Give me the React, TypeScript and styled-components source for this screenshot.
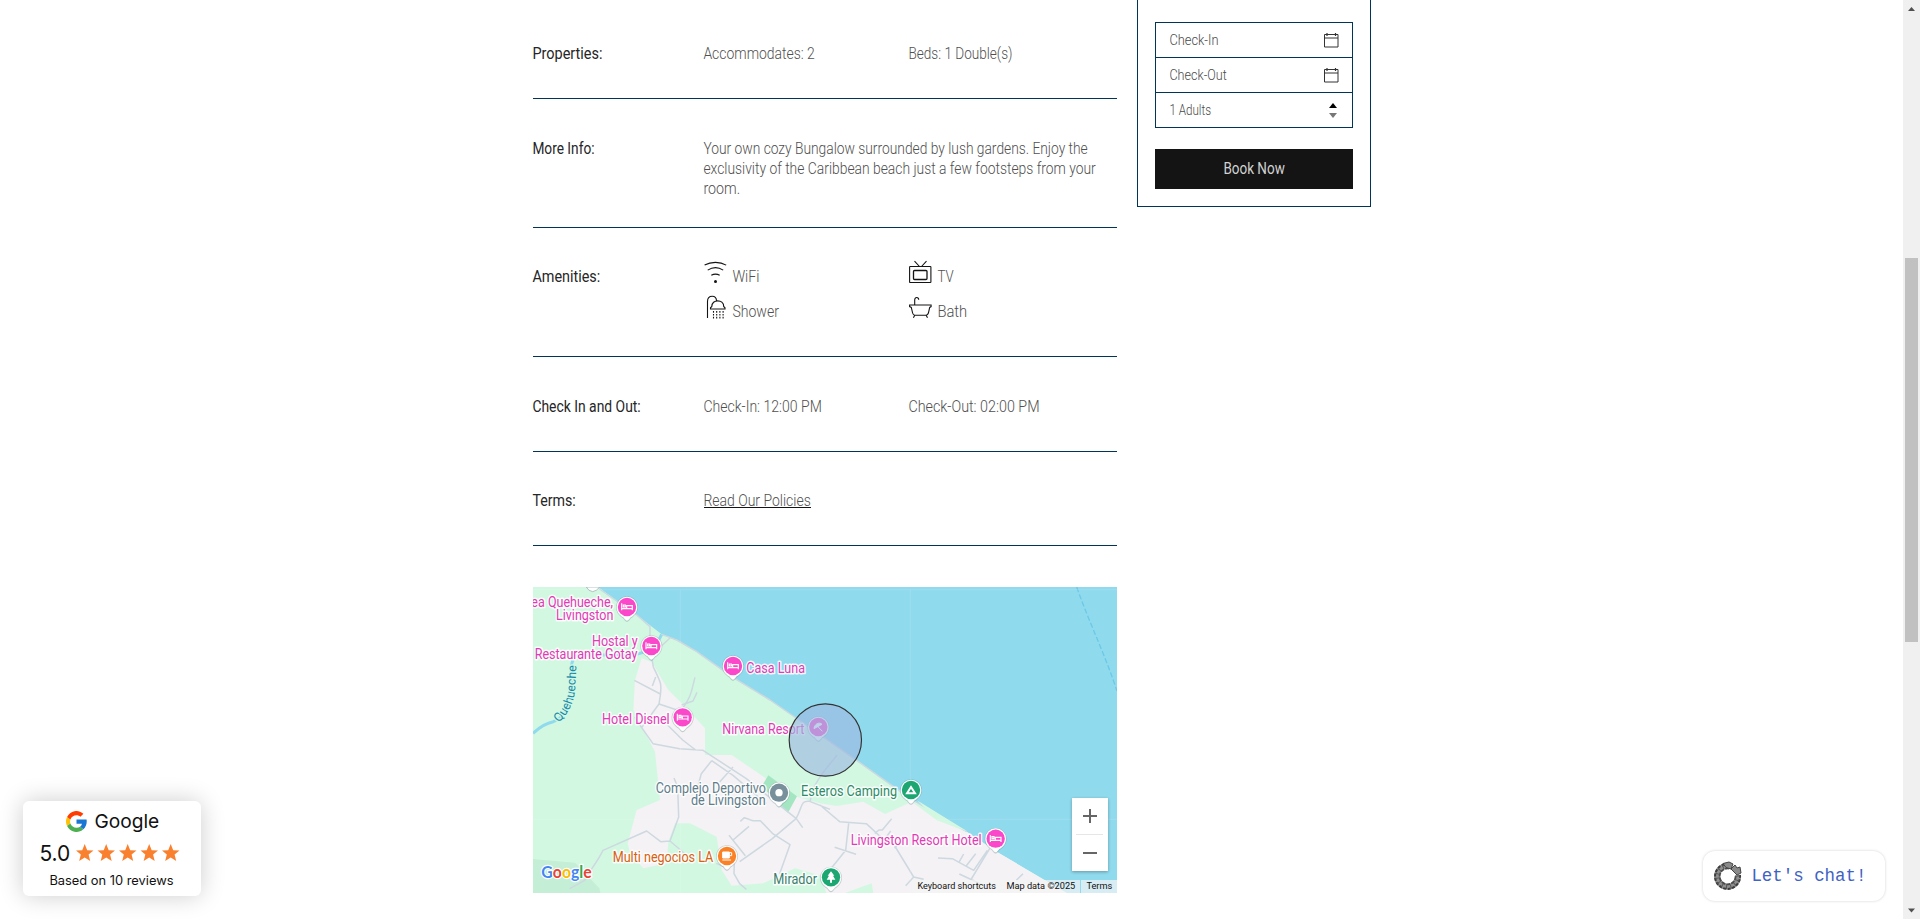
import React, { useLayoutEffect, useRef, useState } from 'react';
import styled, { createGlobalStyle } from 'styled-components';

const navy = '#003557';

const Global = createGlobalStyle`
  *, *::before, *::after { box-sizing: border-box; }
  html, body { margin: 0; height: 100%; overflow: hidden; background: #fff; }
  body { font-family: Roboto, "Liberation Sans", sans-serif; font-size: 16px; line-height: 20px; color: #111; }
`;

const FitBox = styled.span<{ $w: number }>`
  display: inline-block;
  width: ${p => p.$w}px;
  white-space: nowrap;
  text-align: left;
  vertical-align: top;
`;
const FitInner = styled.span`
  display: inline-block;
  transform-origin: 0 50%;
`;

/** Condenses a run of text so that it takes exactly `w` pixels. */
function Fit({ w, children }: { w: number; children: React.ReactNode }) {
  const ref = useRef<HTMLSpanElement>(null);
  const [k, setK] = useState(1);
  useLayoutEffect(() => {
    if (ref.current) setK((w + 0.5) / ref.current.offsetWidth);
  }, [w]);
  return (
    <FitBox $w={w}>
      <FitInner ref={ref} style={{ transform: `translateX(-0.6px) scaleX(${k})` }}>{children}</FitInner>
    </FitBox>
  );
}

const Page = styled.div`
  display: flex;
  height: 919px;
  width: 1920px;
  overflow: hidden;
`;
const Main = styled.main`
  flex: 1;
  display: flex;
  align-items: flex-start;
  padding-left: 533px;
  gap: 20px;
`;
const Details = styled.section`
  width: 584px;
  display: flex;
  flex-direction: column;
`;
const Row = styled.div<{ $h: number; $pad: number }>`
  display: grid;
  grid-template-columns: 171px 205px 1fr;
  align-content: start;
  height: ${p => p.$h}px;
  padding-top: ${p => p.$pad}px;
  border-bottom: 1px solid ${navy};
`;
const Label = styled.div`
  color: #262626;
  font-weight: 400;
`;
const Value = styled.div<{ $wide?: boolean }>`
  color: #505050;
  font-weight: 300;
  grid-column: ${p => (p.$wide ? '2 / -1' : 'auto')};
`;
const PolicyLink = styled.a`
  display: inline-block;
  height: 17px;
  border-bottom: 1px solid #141414;
`;
const Amenities = styled.div`
  grid-column: 2 / -1;
  display: grid;
  grid-template-columns: 205px 1fr;
  grid-auto-rows: 35px;
  margin-top: -7px;
  color: #505050;
  font-weight: 300;
`;
const Amenity = styled.div`
  display: flex;
  gap: 6px;
  svg { display: block; flex: none; }
`;
const AmenityName = styled.span`
  padding-top: 7px;
`;

const Icon = ({ children }: { children: React.ReactNode }) => (
  <svg width="23" height="24" viewBox="0 0 23 24" fill="none" stroke="#141414" strokeWidth="1.1">{children}</svg>
);
const WifiIcon = () => (
  <Icon>
    <path d="M.6 5.100C7 1.400 16 1.400 22.200 5.100M3.700 10.100C8.500 7.100 14.500 7.100 19.200 10.100M7.300 15.300C10 13.800 13 13.800 15.700 15.300" />
    <circle cx="11.500" cy="21.500" r="1.500" fill="#141414" stroke="none" />
  </Icon>
);
const TvIcon = () => (
  <Icon>
    <rect x=".6" y="6.500" width="21.300" height="16" rx=".6" />
    <rect x="4.500" y="10.500" width="13.500" height="9" rx="1" strokeWidth="1.300" />
    <path d="M5.500 1.100l5 5.400M17.500 1.100l-5 5.400" />
  </Icon>
);
const ShowerIcon = () => (
  <Icon>
    <path d="M3.500 23V6.500C3.500 2.800 5.800 1.300 8.300 1.300c2.700 0 4 1.600 4.300 4.600M6.500 14h14.500v-1.200l-1.300-1.300c0-3.800-2.900-5.600-6-5.600s-5.900 1.800-5.900 5.600l-1.300 1.300z" />
    <path d="M9.500 16v8M12.700 16v8M15.900 16v8M19.100 16v8" strokeDasharray="1.700 1.200" />
  </Icon>
);
const BathIcon = () => (
  <Icon>
    <path d="M5.700 10V5c0-3.500 4-3 4-.2M.6 10h21.500v1.600l-1.400.8-1.300 5.600c-.5 1.800-1.200 2.300-2.600 2.300H6.200c-1.500 0-2.200-.5-2.600-2.300L2.300 12.400l-1.700-.8zM5.600 20.400l-1.200 2.400M17.300 20.400l1.200 2.400" />
  </Icon>
);

/* ---------- booking form ---------- */
const BookCard = styled.aside`
  width: 234px;
  height: 207px;
  padding: 22px 17px 0;
  border: 1px solid ${navy};
  border-top: 0;
`;
const Fields = styled.div`
  border: 1px solid ${navy};
  height: 106px;
`;
const Field = styled.div`
  display: flex;
  align-items: center;
  justify-content: space-between;
  height: 35px;
  padding: 0 13px 0 14px;
  font-size: 14px;
  font-weight: 300;
  color: #4a4a4a;
  & + & { border-top: 1px solid ${navy}; }
  &:first-child { height: 34px; }
`;
const Stepper = styled.svg`
  margin-right: 2px;
`;
const BookButton = styled.button`
  display: flex;
  align-items: center;
  justify-content: center;
  width: 198px;
  height: 40px;
  margin-top: 21px;
  border: 0;
  background: #141414;
  color: #d2d2d2;
  font: 400 16px/20px Roboto, sans-serif;
`;
const CalendarIcon = () => (
  <svg width="15" height="15" viewBox="0 0 15 15" fill="none" stroke="#333" strokeWidth="1">
    <path d="M.5 1.500h13.500v12.500H.5zM.5 5h13.500" />
    <path d="M3 0v3M11.500 0v3M2 1.500h2M10.500 1.500h2" strokeWidth="1.200" />
  </svg>
);

/* ---------- map ---------- */
const MapBox = styled.div`
  position: relative;
  width: 584px;
  height: 306px;
  margin-top: 41px;
  overflow: hidden;
  background: #90daee;
  > svg { display: block; }
`;
const ZoomPad = styled.div`
  position: absolute;
  right: 9px;
  top: 211px;
  width: 36px;
  height: 73px;
  background: #fff;
  box-shadow: 0 1px 3px rgba(0, 0, 0, 0.3);
`;
const Attribution = styled.div`
  position: absolute;
  right: 0;
  bottom: 0;
  height: 13px;
  display: flex;
  font: 400 9px/13px Roboto, sans-serif;
  color: #111;
`;
const Credit = styled.span<{ $gap?: boolean }>`
  padding: 0 5px 0 6px;
  background: rgba(245, 245, 245, 0.7);
  margin-left: ${p => (p.$gap ? '1px' : '0')};
`;

type Kind = 'bed' | 'dot' | 'camp' | 'cup' | 'tree' | 'beach';
const pinColors: Record<Kind, string> = {
  bed: '#fb47c9', dot: '#78909c', camp: '#1ba672', cup: '#fb8127', tree: '#1ba672', beach: '#fb47c9',
};
function Pin({ x, y, kind }: { x: number; y: number; kind: Kind }) {
  return (
    <g transform={`translate(${x} ${y})`}>
      <path d="M0 44C-4 44-8 38-12 33C-25 25-33 14-33 0A33 33 0 0 1 33 0C33 14 25 25 12 33C8 38 4 44 0 44z" fill="#6d8790" opacity=".35" transform="translate(0 1)" />
      <path d="M0 41C-4 41-7 36-11 31C-24 24-31 13-31 0A31 31 0 0 1 31 0C31 13 24 24 11 31C7 36 4 41 0 41z" fill="#fff" />
      <circle r="27.500" fill={pinColors[kind]} />
      {kind === 'bed' && <path d="M-16-11v21M-16 5h32v5M16 10V-4H-1V4M-11-6h6v6h-6z" fill="none" stroke="#fff" strokeWidth="3.500" />}
      {kind === 'dot' && <circle r="11" fill="#fff" />}
      {kind === 'camp' && <path d="M0-9L-12 10H12z" fill="none" stroke="#fff" strokeWidth="6" />}
      {kind === 'cup' && (
        <g stroke="#fff" strokeWidth="3">
          <path d="M-13-12H7V6H-13zM-14 12H12" fill="#fff" />
          <path d="M7-10h7v9H7" fill="none" />
        </g>
      )}
      {kind === 'tree' && <path d="M0-18L10-5H6L13 7H3V16H-3V7H-13L-6-5H-10z" fill="#fff" />}
      {kind === 'beach' && <path d="M-13 5C-12-10 4-16 11-8zM-3-3L12 13" fill="#fff" stroke="#fff" strokeWidth="3" />}
    </g>
  );
}

type MapLabel = [text: string, x: number, y: number, w: number, color: string];
const pink = '#e339b6';
const green = '#2c8a66';
const labels: MapLabel[] = [
  ['ea Quehueche,', -5, 60, 245, pink],
  ['Livingston', 69, 98, 172, pink],
  ['Hostal y', 177, 178, 137, pink],
  ['Restaurante Gotay', 5, 216, 308, pink],
  ['Casa Luna', 640, 257, 176, pink],
  ['Hotel Disnel', 207, 410, 203, pink],
  ['Nirvana Resort', 568, 440, 246, pink],
  ['Complejo Deportivo', 368, 618, 331, '#607d8b'],
  ['de Livingston', 474, 655, 224, '#607d8b'],
  ['Esteros Camping', 804, 628, 288, green],
  ['Livingston Resort Hotel', 953, 774, 393, pink],
  ['Multi negocios LA', 239, 825, 302, '#d8600f'],
  ['Mirador', 721, 890, 131, '#3b7d6d'],
];
const pins: [number, number, Kind][] = [
  [282, 60, 'bed'], [355, 177, 'bed'], [600, 237, 'bed'], [449, 391, 'bed'], [856, 420, 'beach'],
  [738, 617, 'dot'], [1134, 609, 'camp'], [1388, 755, 'bed'], [582, 807, 'cup'], [894, 871, 'tree'],
];

function MapDrawing() {
  return (
    <svg width="584" height="306" viewBox="0 0 1752 918">
      <rect width="1752" height="918" fill="#90daee" />
      <path d="M0 0H195L311 84L386 142L431 159L491 194L596 269L711 339L776 384L976 524L1131 634L1301 734L1391 794L1551 889L1601 918H0z" fill="#d3f8e2" />
      <path d="M0 816L126 827L199 904L202 918H0z" fill="#c5eed7" />
      <path d="M326 214L356 225L406 309L461 364L516 424V504H596L706 579L791 629L861 649L911 657L991 644L1056 681L1136 644L1211 699L1301 734L1391 794L1551 889L1601 918H1021L1016 889L936 918H880L860 865L786 844L691 889L596 896L566 849L551 749L471 709H426L406 764L401 829L331 844L291 799L284 769L311 669L381 639L366 494L301 369L306 279z" fill="#f4f2f4" />
      <path d="M686 598L706 565L792 628L765 677z" fill="#a5e6c2" />
      <path d="M0 439C20 420 40 408 61 404C105 390 112 330 116 279C112 240 115 205 140 204H300C340 197 370 180 386 142" fill="none" stroke="#90daee" strokeWidth="9" />
      <g fill="none" stroke="#cdd8e0" strokeWidth="4.500" strokeLinejoin="round">
        <path d="M195 3L311 84L351 119V175M386 142L431 159L491 194L596 269L711 339L776 384L976 524L1131 634L1301 734M411 153L355 205L361 240C385 290 386 290 382 325L378 351L430 368L449 391M304 280L382 321M368 270L358 297M378 351L326 422L360 470L440 485L510 490L640 575L790 695L809 722M326 422L305 390M445 370C480 320 475 310 486 271M446 354L480 342L492 316M400 410L430 440L449 459L488 489M536 521L505 560L494 600M536 521L600 565L700 650M600 540L560 585M423 573L434 600L437 690L411 762L383 764L341 732L210 790C190 830 170 850 155 880L110 905M411 762L460 804M550 829L582 843M604 824L603 860L620 890L640 907M620 824L718 755L789 695C810 660 800 640 830 643L891 667M622 703L634 692L660 701H682L718 739L771 773L740 860M588 745L637 806M600 759L648 718M831 645C835 610 850 580 891 530L912 505M861 654L920 704L1000 710L1040 747L1078 765L1142 870L1172 877M1142 870L1118 896M1076 695L1048 729H1038L1025 739M1085 784L1100 765M1073 732L1060 750M947 709L938 790L890 850M905 781L969 802M1370 785L1315 876M1363 790L1322 850L1258 815L1215 813M1279 824L1292 801M1300 836L1328 800M1279 861L1350 894M1450 880L1470 860" />
      </g>
      <path d="M1152 640L1211 699L1301 732z" fill="#d3f8e2" />
      <path d="M1631 0C1670 110 1715 200 1752 312" fill="none" stroke="#6bc9e6" strokeWidth="4" strokeDasharray="16 7" />
      <path d="M0 8H1752M0 697H1752M442 8V918M1132 8V918" stroke="#fff" strokeWidth="3" opacity=".12" />
      <path id="river" d="M78 407L98 384Q122 350 126 310L131 220" fill="none" />
      <g fontFamily="Roboto, sans-serif" fontSize="41.500" paintOrder="stroke" strokeLinejoin="round" stroke="#fff" strokeOpacity=".85" strokeWidth="9">
        <text fill="#168aa8" stroke="#d3f8e2" fontSize="37"><textPath href="#river">Quehueche</textPath></text>
        {labels.map(([text, x, y, w, color]) => (
          <text key={text} x={x} y={y} textLength={w} lengthAdjust="spacingAndGlyphs" fill={color}>{text}</text>
        ))}
      </g>
      <path d="M160 0H200Q190 13 179 14Q166 12 160 0z" fill="#fff" stroke="#8da4ab" strokeWidth="2" />
      {pins.map(([x, y, kind]) => <Pin key={`${x}`} x={x} y={y} kind={kind} />)}
      <circle cx="877" cy="459" r="108.500" fill="rgb(157,186,225)" fillOpacity=".65" stroke="#333" strokeWidth="3.500" />
      <text x="25" y="873" textLength="151" lengthAdjust="spacingAndGlyphs" fontFamily="Lato, sans-serif" fontWeight="700" fontSize="52" paintOrder="stroke" stroke="#fff" strokeWidth="7">
        <tspan fill="#4285f4">G</tspan><tspan fill="#ea4335">o</tspan><tspan fill="#fbbc04">o</tspan><tspan fill="#4285f4">g</tspan><tspan fill="#34a853">l</tspan><tspan fill="#ea4335">e</tspan>
      </text>
    </svg>
  );
}

/* ---------- floating widgets ---------- */
const Reviews = styled.div`
  position: absolute;
  left: 23px;
  top: 801px;
  width: 178px;
  height: 95px;
  border-radius: 6px;
  background: #fff;
  box-shadow: 0 0 24px rgba(0, 0, 0, 0.2);
  font-family: Inter, sans-serif;
  font-weight: 400;
  color: #111;
`;
const Brand = styled.div`
  display: flex;
  align-items: center;
  gap: 8px;
  padding: 9px 0 0 43px;
  height: 31px;
  font-size: 19px;
  line-height: 23px;
`;
const Score = styled.div`
  display: flex;
  align-items: center;
  gap: 6px;
  height: 42px;
  padding: 0 0 0 17px;
  font-size: 22px;
  line-height: 26px;
`;
const Based = styled.div`
  padding-left: 27px;
  margin-top: -3px;
  font-size: 12.500px;
  line-height: 20px;
`;
const Chat = styled.div`
  position: absolute;
  left: 1703px;
  top: 851px;
  width: 182px;
  height: 50px;
  display: flex;
  align-items: center;
  gap: 10px;
  padding-left: 10px;
  border-radius: 12px;
  background: #fff;
  box-shadow: 0 0 3px rgba(0, 0, 0, 0.18);
  font-family: "Liberation Mono", monospace;
  font-size: 17.500px;
  color: #3f62c4;
`;

const GoogleG = () => (
  <svg width="21" height="21" viewBox="0 0 48 48">
    <path fill="#ffc107" d="M10 28.500A14.500 14.500 0 0 1 10 19.500L2.500 13.500a23.500 23.500 0 0 0 0 21z" />
    <path fill="#ff3d00" d="M2.500 13.500L10 19.500C12 13.500 17.500 9.800 24 9.800c3.500 0 6.500 1.200 9 3.300l6.800-6.800A23.500 23.500 0 0 0 2.500 13.500z" />
    <path fill="#4caf50" d="M2.500 34.500L10 28.500C12 34.500 17.500 38.200 24 38.200c3.300 0 6-.8 8.200-2.400l7.500 6A23.500 23.500 0 0 1 2.500 34.500z" />
    <path fill="#1976d2" d="M24 19.500h23c1.500 9.500-1.500 17-7.300 22.300l-7.500-6c2.300-1.600 3.700-3.900 4.300-6.800H24z" />
  </svg>
);
const Stars = () => (
  <svg width="104" height="18" viewBox="0 0 104 18" fill="#f9802f">
    {[0, 1, 2, 3, 4].map(i => (
      <path key={i} transform={`translate(${i * 21.5} 0)`} d="M8.700 0L11.200 6.200L17.500 6.600L12.600 10.600L14.200 17L8.700 13.500L3.200 17L4.800 10.600L0 6.600L6.200 6.200z" />
    ))}
  </svg>
);
const Wreath = () => (
  <svg width="29" height="30" viewBox="0 0 29 30" fill="none">
    <path d="M17 5A10.500 10.500 0 1 0 25 14" stroke="#8f8f8f" strokeWidth="6" />
    <path d="M16 3A12.500 12.500 0 1 0 27 14" stroke="#3c3c3c" strokeWidth="2" strokeDasharray="3 1.500" />
    <path d="M16 7.500A8 8 0 1 0 22.500 14" stroke="#4c4c4c" strokeWidth="1.800" strokeDasharray="4 1" />
    <path d="M15 5A10.500 10.500 0 1 0 25 14" stroke="#555" strokeWidth="4" strokeDasharray="1 3.500" />
    <path d="M10 2.500l6-1.500 4 2-2 5-5-1.500zM18 8l4-4 2 3 3-1 1 6-4 2z" fill="#8a8a8a" stroke="#444" />
  </svg>
);

/* ---------- page scrollbar ---------- */
const Scrollbar = styled.div`
  width: 17px;
  height: 919px;
  display: flex;
  flex-direction: column;
  align-items: center;
  background: #f0f0f0;
`;
const Arrow = styled.svg`
  flex: none;
  width: 17px;
  height: 17px;
`;
const Thumb = styled.div`
  width: 13px;
  height: 384px;
  margin: 241px 0 auto;
  background: #c1c1c1;
`;

export default function App() {
  return (
    <>
      <Global />
      <Page>
        <Main>
          <Details>
            <Row $h={99} $pad={44}>
              <Label><Fit w={70}>Properties:</Fit></Label>
              <Value><Fit w={111}>Accommodates: 2</Fit></Value>
              <Value><Fit w={104}>Beds: 1 Double(s)</Fit></Value>
            </Row>
            <Row $h={129} $pad={40}>
              <Label><Fit w={62}>More Info:</Fit></Label>
              <Value $wide>
                <Fit w={384}>Your own cozy Bungalow surrounded by lush gardens. Enjoy the</Fit>
                <Fit w={392}>exclusivity of the Caribbean beach just a few footsteps from your</Fit>
                <Fit w={36}>room.</Fit>
              </Value>
            </Row>
            <Row $h={129} $pad={39}>
              <Label><Fit w={67}>Amenities:</Fit></Label>
              <Amenities>
                <Amenity><WifiIcon /><AmenityName><Fit w={27}>WiFi</Fit></AmenityName></Amenity>
                <Amenity><TvIcon /><AmenityName><Fit w={16}>TV</Fit></AmenityName></Amenity>
                <Amenity><ShowerIcon /><AmenityName><Fit w={46}>Shower</Fit></AmenityName></Amenity>
                <Amenity><BathIcon /><AmenityName><Fit w={29}>Bath</Fit></AmenityName></Amenity>
              </Amenities>
            </Row>
            <Row $h={95} $pad={40}>
              <Label><Fit w={108}>Check In and Out:</Fit></Label>
              <Value><Fit w={118}>Check-In: 12:00 PM</Fit></Value>
              <Value><Fit w={131}>Check-Out: 02:00 PM</Fit></Value>
            </Row>
            <Row $h={94} $pad={39}>
              <Label><Fit w={43}>Terms:</Fit></Label>
              <Value><PolicyLink><Fit w={107}>Read Our Policies</Fit></PolicyLink></Value>
            </Row>
            <MapBox>
              <MapDrawing />
              <Attribution>
                <Credit><Fit w={78}>Keyboard shortcuts</Fit></Credit>
                <Credit><Fit w={68}>Map data ©2025</Fit></Credit>
                <Credit $gap><Fit w={25}>Terms</Fit></Credit>
              </Attribution>
              <ZoomPad>
                <svg width="36" height="73" viewBox="0 0 36 73">
                  <path d="M11 18h14M18 11v14M11 55h14" stroke="#666" strokeWidth="2" />
                  <path d="M4 36.500h27" stroke="#e6e6e6" />
                </svg>
              </ZoomPad>
            </MapBox>
          </Details>
          <BookCard>
            <Fields>
              <Field><Fit w={49}>Check-In</Fit><CalendarIcon /></Field>
              <Field><Fit w={57}>Check-Out</Fit><CalendarIcon /></Field>
              <Field>
                <Fit w={41}>1 Adults</Fit>
                <Stepper width="8" height="15" viewBox="0 0 8 15">
                  <path d="M4 0L8 5H0z" fill="#000" />
                  <path d="M4 15L8 10H0z" fill="#777" />
                </Stepper>
              </Field>
            </Fields>
            <BookButton><Fit w={61}>Book Now</Fit></BookButton>
          </BookCard>
        </Main>
        <Scrollbar>
          <Arrow viewBox="0 0 17 17"><path d="M8.500 7L12 11H5z" fill="#505050" /></Arrow>
          <Thumb />
          <Arrow viewBox="0 0 17 17"><path d="M8.500 10.500L12 6.500H5z" fill="#505050" /></Arrow>
        </Scrollbar>
      </Page>
      <Reviews>
        <Brand><GoogleG /><Fit w={64}>Google</Fit></Brand>
        <Score><Fit w={30}>5.0</Fit><Stars /></Score>
        <Based><Fit w={124}>Based on 10 reviews</Fit></Based>
      </Reviews>
      <Chat><Wreath /><Fit w={115}>Let's chat!</Fit></Chat>
    </>
  );
}
